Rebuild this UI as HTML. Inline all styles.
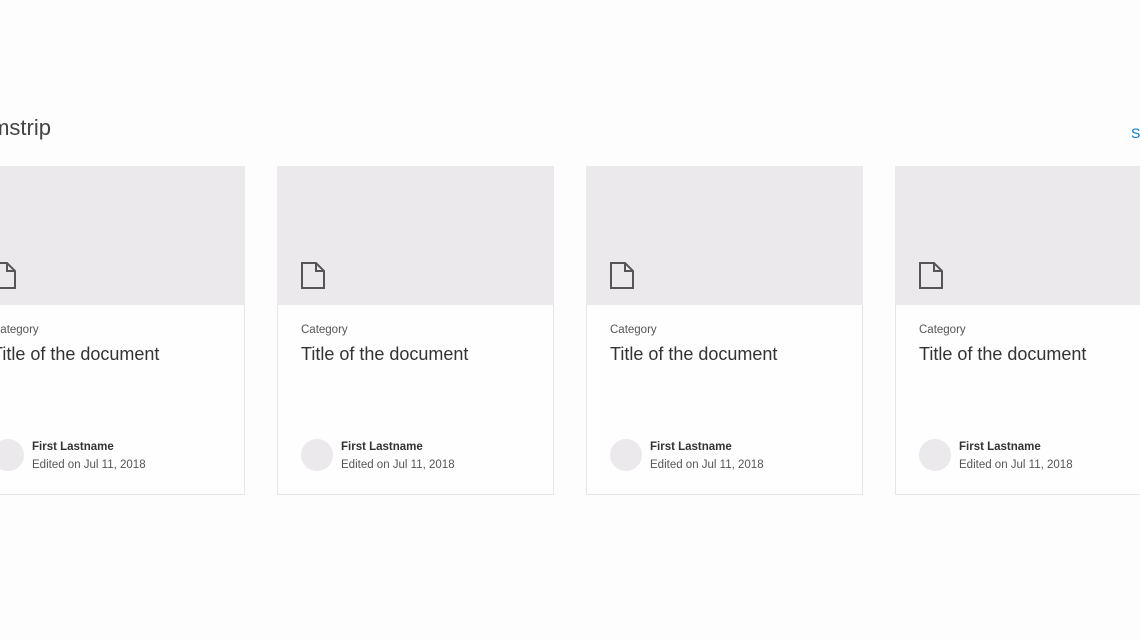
<!DOCTYPE html>
<html><head><style>
body{margin:0;width:1140px;height:640px;background:#fcfdfc;font-family:"Liberation Sans",sans-serif;position:relative;overflow:hidden}
.h{position:absolute;right:1089px;top:115px;font-size:22px;color:#444;font-weight:300;white-space:nowrap}
.s{position:absolute;left:1131px;top:125px;font-size:14px;color:#0078d4}
.c{position:absolute;top:166px;width:275px;height:328px;border:1px solid #e6e6e6;border-top:none;background:#fdfefd}
.img{height:139px;background:#ebe9ec;margin:0 -1px;position:relative}
.img svg{position:absolute;left:24px;top:96px}
.cat{position:absolute;left:23px;top:158px;font-size:11.5px;color:#555}
.t{position:absolute;left:23px;top:178px;font-size:18px;color:#333;white-space:nowrap}
.av{position:absolute;left:23px;top:273px;width:32px;height:32px;border-radius:50%;background:#ebe9ec}
.n{position:absolute;left:63px;top:275px;font-size:11.5px;font-weight:bold;color:#333}
.d{position:absolute;left:63px;top:293px;font-size:11.5px;color:#555}
</style></head><body>
<div class="h">Filmstrip</div>
<div class="s">S</div>
<div class="c" style="left:-32px"><div class="img"><svg width="25" height="27" viewBox="0 0 25 27"><path d="M1 1H15L23 9V26H1Z M15 1V9H23" fill="none" stroke="#555" stroke-width="2"/></svg></div><div class="cat">Category</div><div class="t">Title of the document</div><div class="av"></div><div class="n">First Lastname</div><div class="d">Edited on Jul 11, 2018</div></div>
<div class="c" style="left:277px"><div class="img"><svg width="25" height="27" viewBox="0 0 25 27"><path d="M1 1H15L23 9V26H1Z M15 1V9H23" fill="none" stroke="#555" stroke-width="2"/></svg></div><div class="cat">Category</div><div class="t">Title of the document</div><div class="av"></div><div class="n">First Lastname</div><div class="d">Edited on Jul 11, 2018</div></div>
<div class="c" style="left:586px"><div class="img"><svg width="25" height="27" viewBox="0 0 25 27"><path d="M1 1H15L23 9V26H1Z M15 1V9H23" fill="none" stroke="#555" stroke-width="2"/></svg></div><div class="cat">Category</div><div class="t">Title of the document</div><div class="av"></div><div class="n">First Lastname</div><div class="d">Edited on Jul 11, 2018</div></div>
<div class="c" style="left:895px"><div class="img"><svg width="25" height="27" viewBox="0 0 25 27"><path d="M1 1H15L23 9V26H1Z M15 1V9H23" fill="none" stroke="#555" stroke-width="2"/></svg></div><div class="cat">Category</div><div class="t">Title of the document</div><div class="av"></div><div class="n">First Lastname</div><div class="d">Edited on Jul 11, 2018</div></div>
</body></html>
